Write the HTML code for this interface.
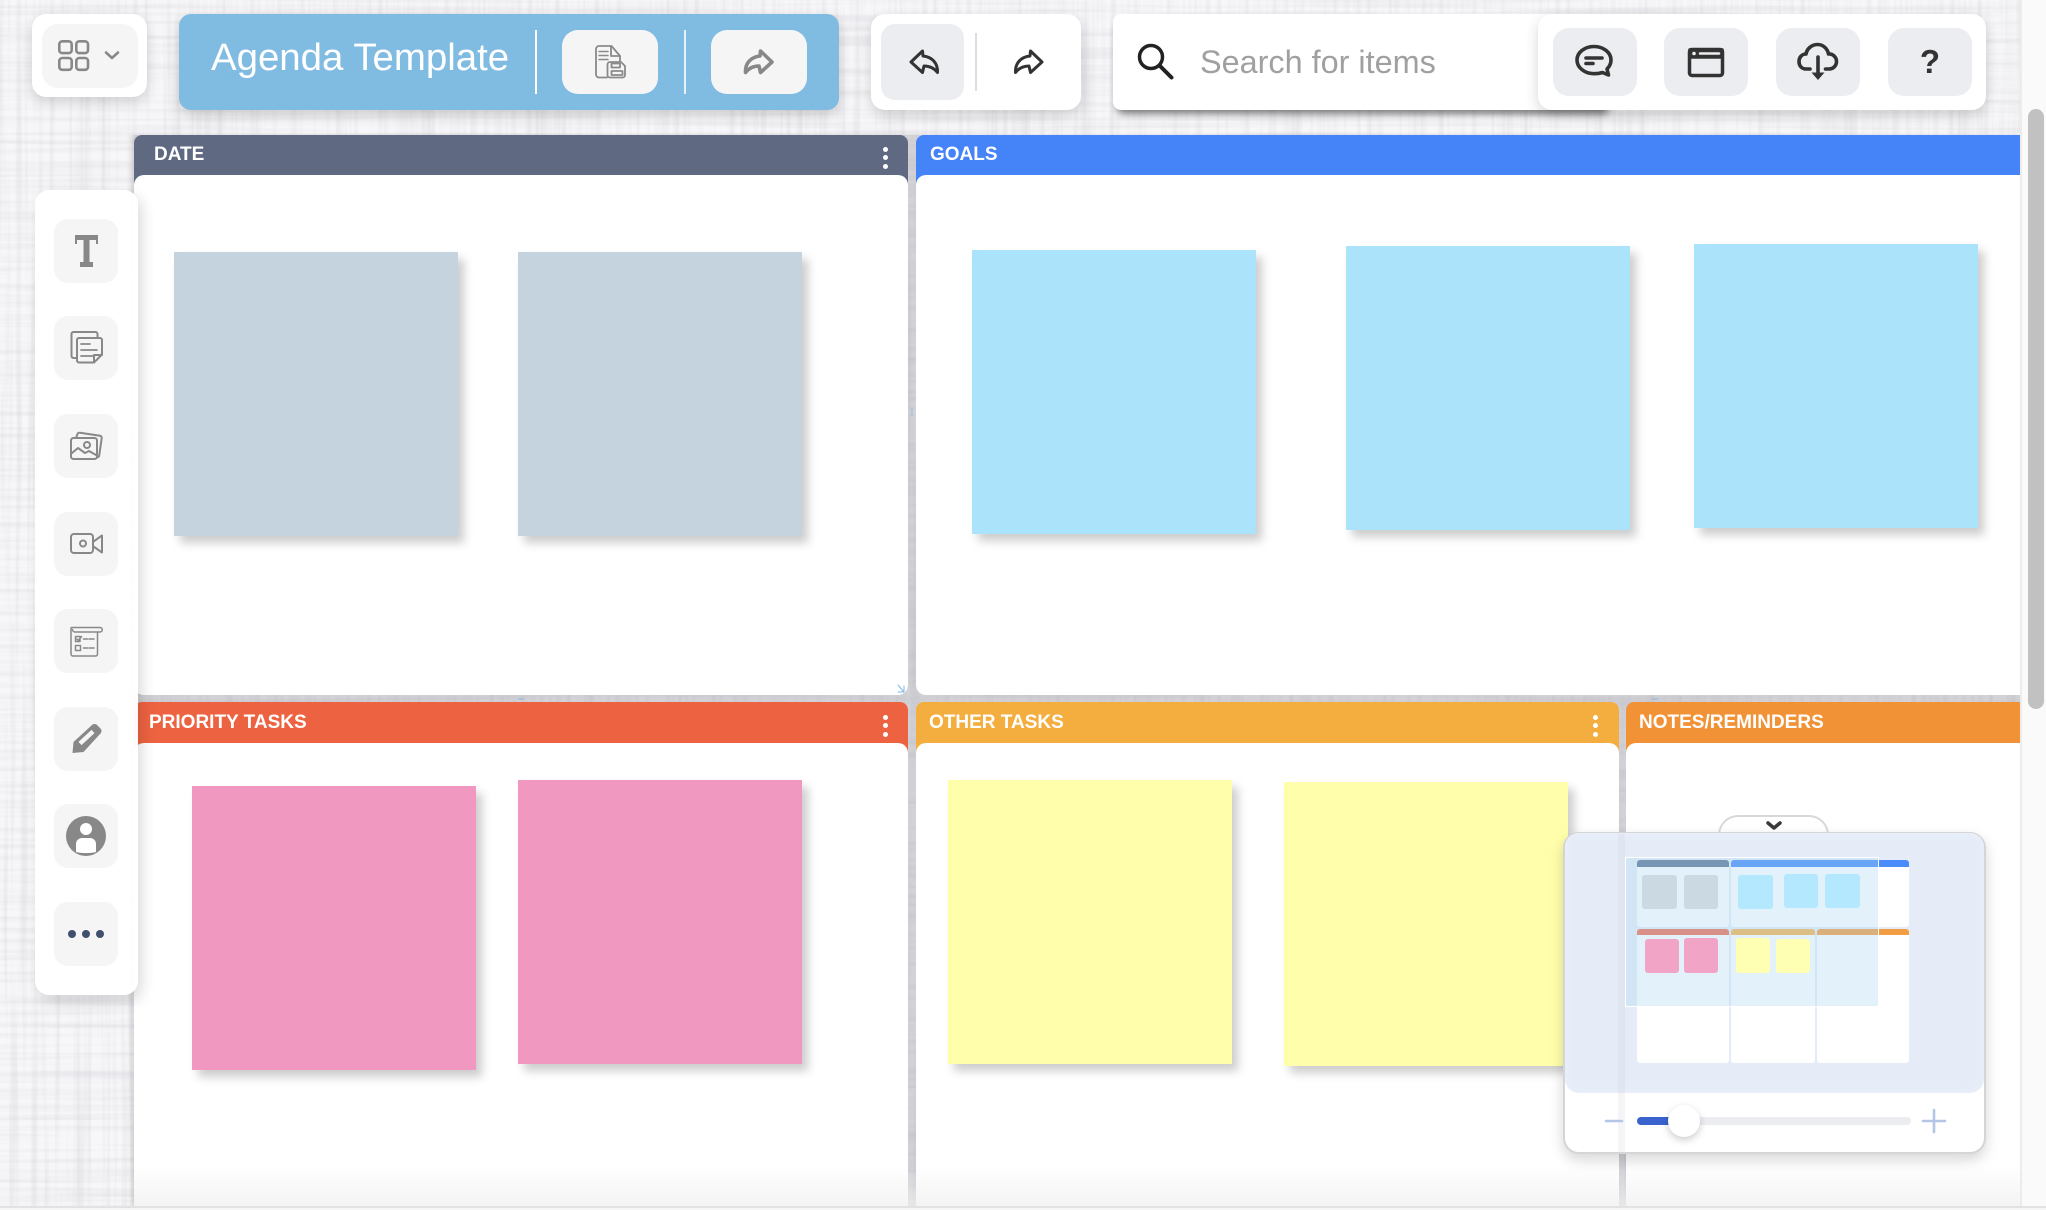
<!DOCTYPE html>
<html lang="en">
<head>
<meta charset="utf-8">
<title>Agenda Template</title>
<style>
html,body{margin:0;padding:0;width:2046px;height:1210px;overflow:hidden;background:#f5f5f7;font-family:"Liberation Sans",sans-serif}
div,span{position:absolute;box-sizing:border-box}
#bg{left:0;top:0;width:2046px;height:1210px;background-color:#f7f7f9}
#board{left:134px;top:135px;width:1886px;height:1071px;background-color:rgba(120,120,130,.29);box-shadow:-3px 0 4px rgba(0,0,0,.12)}
.cell{overflow:hidden}
.hd{left:0;top:0;width:100%;height:52px;border-radius:8px 8px 0 0}
.hd-t{left:0;top:0;color:#fff;font-weight:700;font-size:19px;line-height:20px;white-space:nowrap}
.body{left:0;top:40px;width:100%;bottom:0;background:#fff;border-radius:10px 10px 10px 10px}
.note{width:284px;height:284px;box-shadow:6px 7px 9px rgba(0,0,0,.2)}
.g{background:#c5d3de}.b{background:#abe3fb}.p{background:#f098c0}.y{background:#fefeab}
.dot{width:5px;height:5px;border-radius:50%;background:#fff}
.card{background:#fff;border-radius:14px;box-shadow:0 5px 14px rgba(0,0,0,.16)}
.btn{background:#f5f5f5;border-radius:16px}
.rb{background:#ecedf0;border-radius:16px;top:28px;width:84px;height:68px}
.sb{left:54px;width:64px;height:64px;background:#f5f5f5;border-radius:14px}
.m{position:absolute;border-radius:3px}
.mh{position:absolute;border-radius:3px 3px 0 0}
svg{position:absolute;left:0;top:0;overflow:visible}
</style>
</head>
<body>
<div id="bg">
<svg width="2046" height="1210" viewBox="0 0 2046 1210">
  <defs>
    <filter id="fv" x="0" y="0" width="100%" height="100%"><feTurbulence type="fractalNoise" baseFrequency="0.18 0.004" numOctaves="2" seed="4"/><feColorMatrix type="matrix" values="0 0 0 0 .6  0 0 0 0 .6  0 0 0 0 .65  .75 0 0 0 -.32"/></filter>
    <filter id="fh" x="0" y="0" width="100%" height="100%"><feTurbulence type="fractalNoise" baseFrequency="0.004 0.18" numOctaves="2" seed="9"/><feColorMatrix type="matrix" values="0 0 0 0 .6  0 0 0 0 .6  0 0 0 0 .65  .75 0 0 0 -.32"/></filter>
  </defs>
  <rect width="2046" height="1210" filter="url(#fv)"/>
  <rect width="2046" height="1210" filter="url(#fh)"/>
</svg>
</div>

<div id="board"></div>

<!-- Row 1 -->
<div class="cell" style="left:134px;top:135px;width:774px;height:560px">
  <div class="hd" style="background:#5f6a82"></div>
  <div class="body"></div>
  <div class="hd-t" style="left:20px;top:10px">DATE</div>
  <div class="dot" style="left:749px;top:12px"></div><div class="dot" style="left:749px;top:20px"></div><div class="dot" style="left:749px;top:29px"></div>
</div>
<div class="cell" style="left:916px;top:135px;width:1104px;height:560px">
  <div class="hd" style="background:#4483f8;border-radius:8px 0 0 0"></div>
  <div class="body" style="border-radius:10px 0 0 10px"></div>
  <div class="hd-t" style="left:14px;top:10px">GOALS</div>
</div>

<!-- Row 2 -->
<div class="cell" style="left:134px;top:702px;width:774px;height:504px">
  <div class="hd" style="background:#ed6341"></div>
  <div class="body" style="top:41px;border-radius:10px 10px 0 0"></div>
  <div class="hd-t" style="left:15px;top:11px">PRIORITY TASKS</div>
  <div class="dot" style="left:749px;top:13px"></div><div class="dot" style="left:749px;top:21px"></div><div class="dot" style="left:749px;top:30px"></div>
</div>
<div class="cell" style="left:916px;top:702px;width:703px;height:504px">
  <div class="hd" style="background:#f3ae3f"></div>
  <div class="body" style="top:41px;border-radius:10px 10px 0 0"></div>
  <div class="hd-t" style="left:13px;top:11px">OTHER TASKS</div>
  <div class="dot" style="left:677px;top:13px"></div><div class="dot" style="left:677px;top:21px"></div><div class="dot" style="left:677px;top:30px"></div>
</div>
<div class="cell" style="left:1626px;top:702px;width:394px;height:504px">
  <div class="hd" style="background:#f29236;border-radius:8px 0 0 0"></div>
  <div class="body" style="top:41px;border-radius:10px 0 0 0"></div>
  <div class="hd-t" style="left:13px;top:11px">NOTES/REMINDERS</div>
</div>

<!-- bottom fade of cells -->
<div style="left:134px;top:1165px;width:1886px;height:41px;background:linear-gradient(rgba(240,240,241,0),rgba(240,240,241,.75))"></div>

<!-- Notes -->
<div class="note g" style="left:174px;top:252px"></div>
<div class="note g" style="left:518px;top:252px"></div>
<div class="note b" style="left:972px;top:250px"></div>
<div class="note b" style="left:1346px;top:246px"></div>
<div class="note b" style="left:1694px;top:244px"></div>
<div class="note p" style="left:192px;top:786px"></div>
<div class="note p" style="left:518px;top:780px"></div>
<div class="note y" style="left:948px;top:780px"></div>
<div class="note y" style="left:1284px;top:782px"></div>

<!-- Scrollbars -->
<div style="left:2020px;top:0;width:26px;height:1206px;background:#fafafa;border-left:2px solid #ececec"></div>
<div style="left:2028px;top:109px;width:16px;height:600px;background:#c1c1c1;border-radius:8px"></div>
<div style="left:0;top:1206px;width:2046px;height:4px;background:#f6f6f6;border-top:2px solid #e2e2e2"></div>

<!-- App button -->
<div class="card" style="left:32px;top:14px;width:115px;height:83px"></div>
<div class="btn" style="left:42px;top:24px;width:96px;height:64px"></div>

<!-- Title bar -->
<div style="left:179px;top:14px;width:660px;height:96px;background:#80bbe2;border-radius:12px;box-shadow:0 5px 14px rgba(0,0,0,.18)"></div>
<div style="left:211px;top:35px;color:#fff;font-size:38.4px;line-height:46px;white-space:nowrap">Agenda Template</div>
<div style="left:535px;top:30px;width:2px;height:64px;background:#fff"></div>
<div class="btn" style="left:562px;top:30px;width:96px;height:64px"></div>
<div style="left:684px;top:30px;width:2px;height:64px;background:#e6f1f9"></div>
<div class="btn" style="left:711px;top:30px;width:96px;height:64px"></div>

<!-- Undo / redo -->
<div class="card" style="left:871px;top:14px;width:210px;height:96px"></div>
<div style="left:881px;top:24px;width:83px;height:76px;background:#ecedf0;border-radius:14px"></div>
<div style="left:975px;top:33px;width:2px;height:58px;background:#dddddf"></div>

<!-- Search -->
<div style="left:1113px;top:14px;width:496px;height:96px;background:#fff;border-radius:8px;box-shadow:2px 6px 8px -2px rgba(0,0,0,.5)"></div>
<div style="left:1200px;top:43px;color:#a0a0a0;font-size:32.4px;line-height:38px;white-space:nowrap">Search for items</div>

<!-- Right card -->
<div class="card" style="left:1538px;top:14px;width:448px;height:96px"></div>
<div class="rb" style="left:1553px"></div>
<div class="rb" style="left:1664px"></div>
<div class="rb" style="left:1776px"></div>
<div class="rb" style="left:1888px"></div>
<div style="left:1888px;width:84px;top:43px;text-align:center;color:#333;font-weight:700;font-size:33px;line-height:38px">?</div>

<!-- Sidebar -->
<div style="left:35px;top:190px;width:103px;height:805px;background:rgba(255,255,255,.97);border-radius:14px;box-shadow:4px 6px 14px rgba(0,0,0,.14)"></div>
<div class="sb" style="top:219px"></div>
<div class="sb" style="top:316px"></div>
<div class="sb" style="top:414px"></div>
<div class="sb" style="top:512px"></div>
<div class="sb" style="top:609px"></div>
<div class="sb" style="top:707px"></div>
<div class="sb" style="top:804px"></div>
<div class="sb" style="top:902px"></div>

<!-- Minimap -->
<div style="left:1718px;top:815px;width:111px;height:24px;background:#fff;border:2px solid #d8d8d8;border-bottom:0;border-radius:20px 20px 0 0"></div>
<div style="left:1563px;top:832px;width:423px;height:322px;background:#fff;border:2px solid #d5d5d5;border-radius:16px;box-shadow:0 6px 14px rgba(0,0,0,.16);overflow:hidden"></div>
<div style="left:1565px;top:833px;width:419px;height:260px;background:#e5ecf8;border-radius:14px;box-shadow:inset 0 0 8px #edf2fb"></div>
<div class="m" style="left:1637px;top:860px;width:92px;height:67px;background:#fff"></div>
<div class="m" style="left:1731px;top:860px;width:178px;height:67px;background:#fff"></div>
<div class="m" style="left:1637px;top:929px;width:92px;height:134px;background:#fff"></div>
<div class="m" style="left:1731px;top:929px;width:84px;height:134px;background:#fff"></div>
<div class="m" style="left:1817px;top:929px;width:92px;height:134px;background:#fff"></div>
<div class="mh" style="left:1637px;top:860px;width:92px;height:7px;background:#5f7696"></div>
<div class="mh" style="left:1731px;top:860px;width:178px;height:7px;background:#4a8cf9"></div>
<div class="mh" style="left:1637px;top:929px;width:92px;height:6px;background:#ed6f55"></div>
<div class="mh" style="left:1731px;top:929px;width:84px;height:6px;background:#f3b354"></div>
<div class="mh" style="left:1817px;top:929px;width:92px;height:6px;background:#f29c44"></div>
<div style="left:1625px;top:857px;width:254px;height:150px;border:1.5px solid #fff;background:rgba(170,215,240,.33)"></div>
<div class="m" style="left:1642px;top:875px;width:35px;height:34px;background:#cbd9e3"></div>
<div class="m" style="left:1684px;top:875px;width:34px;height:34px;background:#cbd9e3"></div>
<div class="m" style="left:1738px;top:875px;width:35px;height:34px;background:#b4e8fe"></div>
<div class="m" style="left:1784px;top:874px;width:34px;height:34px;background:#b4e8fe"></div>
<div class="m" style="left:1825px;top:874px;width:35px;height:34px;background:#b4e8fe"></div>
<div class="m" style="left:1645px;top:939px;width:34px;height:34px;background:#f1a4c6"></div>
<div class="m" style="left:1684px;top:938px;width:34px;height:35px;background:#f1a4c6"></div>
<div class="m" style="left:1736px;top:938px;width:34px;height:35px;background:#ffffb4"></div>
<div class="m" style="left:1776px;top:939px;width:34px;height:34px;background:#ffffb4"></div>
<div style="left:1618px;top:834px;width:7px;height:318px;background:rgba(190,195,205,.16)"></div>
<div style="left:1637px;top:1117px;width:274px;height:8px;background:#ecedf1;border-radius:4px"></div>
<div style="left:1637px;top:1117px;width:50px;height:8px;background:#3a63cf;border-radius:4px"></div>
<div style="left:1668px;top:1105px;width:32px;height:32px;background:#fff;border-radius:50%;box-shadow:0 3px 8px rgba(0,0,0,.2)"></div>

<!-- All icons -->
<svg width="2046" height="1210" viewBox="0 0 2046 1210" fill="none" stroke-linecap="round" stroke-linejoin="round">
  <!-- grid -->
  <g stroke="#888" stroke-width="2.6">
    <rect x="59.300" y="41.300" width="12.400" height="11.800" rx="3"/><rect x="76.300" y="41.300" width="11.700" height="11.800" rx="3"/>
    <rect x="59.300" y="58" width="12.400" height="11.800" rx="3"/><rect x="76.300" y="58" width="11.700" height="11.800" rx="3"/>
    <path d="M106 52.500l6 5.500 6-5.500"/>
  </g>
  <!-- save doc -->
  <g stroke="#8a8a8a" stroke-width="1.800">
    <path d="M607 77.500h-8a3 3 0 0 1-3-3V49a3 3 0 0 1 3-3h12.500l8.500 10v5.500"/>
    <path d="M611 46.500v9.500h9"/>
    <path d="M599 51.500h9M599 55.500h9M599 59.500h9" stroke-width="1.500"/>
    <path d="M610 62h11l4 4v9a2.500 2.500 0 0 1-2.500 2.500H610a2.500 2.500 0 0 1-2.500-2.500V64.500A2.500 2.500 0 0 1 610 62z"/>
    <rect x="611.500" y="63.500" width="8.500" height="4"/>
    <rect x="611.500" y="71" width="11" height="4"/>
  </g>
  <!-- share -->
  <path stroke="#888" stroke-width="3.600" d="M745.500 72.500C745 63 751 57 760 56L760.500 51L772 62L760.500 72.500L759 66C753 66 749 68 745.500 72.500Z"/>
  <!-- undo / redo -->
  <path stroke="#333" stroke-width="3" transform="matrix(-1 0 0 1 1683 0)" d="M745.500 72.500C745 63 751 57 760 56L760.500 51L772 62L760.500 72.500L759 66C753 66 749 68 745.500 72.500Z"/>
  <path stroke="#333" stroke-width="3" transform="translate(270 0)" d="M745.500 72.500C745 63 751 57 760 56L760.500 51L772 62L760.500 72.500L759 66C753 66 749 68 745.500 72.500Z"/>
  <!-- search -->
  <circle cx="1151" cy="57" r="11.500" stroke="#222" stroke-width="3.500"/>
  <path d="M1160 66l11.500 11.500" stroke="#222" stroke-width="4"/>
  <!-- chat -->
  <g stroke="#333" stroke-width="3.600">
    <path d="M1594 46.500c9.500 0 17 6 17 13.500 0 3.500-1.500 6.500-4 9l1.500 6-6-2.500c-2.500.8-5.500 1.200-8.500 1.200-9.500 0-17-6.200-17-13.700s7.500-13.500 17-13.500z"/>
    <path d="M1586 58h16M1586 63.500h7"/>
  </g>
  <!-- window -->
  <rect x="1689.500" y="49.500" width="33" height="26" rx="2.500" stroke="#333" stroke-width="3.500"/>
  <rect x="1689.500" y="49.500" width="33" height="8" fill="#333" stroke="#333" stroke-width="2.500"/>
  <circle cx="1694" cy="53.500" r="1.800" fill="#ecedf0"/>
  <path d="M1700 53.500h19" stroke="#ecedf0" stroke-width="2.500"/>
  <!-- cloud -->
  <g stroke="#333" stroke-width="3.600">
    <path d="M1810 69h-4c-4.500 0-7-3.500-7-7.500s2.800-7.500 7-7.500c1-5.500 6-9.500 11.500-9.500 5.500 0 10 4 11 9.500 4.500-.3 8 3.300 8 7.500s-3.300 7.500-7.500 7.500h-3.500"/>
    <path d="M1818 57v17"/>
  </g>
  <path d="M1811.500 72.500h13l-6.500 7.500z" fill="#333"/>
  <!-- sidebar: T -->
  <path d="M75 235h23v9h-2v-4h-6.500V262h3.500v5h-13v-5h3.500v-22H77v4h-2z" fill="#888"/>
  <!-- notes -->
  <g stroke="#888" stroke-width="2">
    <path d="M77 358h-3.500a2 2 0 0 1-2-2v-22a2 2 0 0 1 2-2h22a2 2 0 0 1 2 2v4"/>
    <path d="M94 362.500H79a2 2 0 0 1-2-2V340a2 2 0 0 1 2-2h21a2 2 0 0 1 2 2v14.500z"/>
    <path d="M94 362.500V355h8"/>
    <path d="M81 344h9M81 350h16M81 356h12" stroke-width="1.800"/>
  </g>
  <!-- images -->
  <g stroke="#888" stroke-width="2">
    <path d="M76 438l1.500-4a2 2 0 0 1 2.500-1.200l20 3a2 2 0 0 1 1.700 2.300l-2.500 17.500a2 2 0 0 1-2.200 1.700"/>
    <rect x="71" y="438" width="26" height="21" rx="2.500"/>
    <circle cx="87" cy="445" r="3"/>
    <path d="M72 453l6-5 7 5 4-2 7 4"/>
  </g>
  <!-- video -->
  <g stroke="#888" stroke-width="2">
    <rect x="71" y="534" width="22" height="19" rx="3"/>
    <circle cx="83" cy="543.500" r="3"/>
    <path d="M93.500 541.500l8.500-6v17l-8.500-6"/>
  </g>
  <!-- form -->
  <g stroke="#888" stroke-width="1.500">
    <path d="M97.500 632v22a2 2 0 0 1-2 2H73a2 2 0 0 1-2-2V628"/>
    <path d="M71.500 627.500h28.500a2 2 0 0 1 0 4.500H75a2.500 2.500 0 0 1-2.500-2.500"/>
    <rect x="75.500" y="645.500" width="5" height="5"/>
    <path d="M75.500 636.500h4.500v5h-4.500zM77 639l1.500 1.500 3-4M83.500 639h4M89 639h5M83.500 648h4M89 648h5"/>
  </g>
  <!-- pencil -->
  <path d="M72.500 753l1-11 18.500-17c1.500-1.300 3.500-1.300 5 0l3.500 3.500c1.300 1.500 1.300 3.500 0 5L83.500 752z" fill="#888"/>
  <path d="M80 743.500L93 731.500" stroke="#f5f5f5" stroke-width="4.500" stroke-linecap="butt"/>
  <!-- user -->
  <circle cx="86" cy="836" r="20" fill="#888"/>
  <circle cx="86" cy="829" r="6" fill="#fff"/>
  <path d="M76 852v-8a6 6 0 0 1 6-6h8a6 6 0 0 1 6 6v8c-6 1.500-14 1.500-20 0z" fill="#fff"/>
  <!-- more -->
  <circle cx="72" cy="934" r="4" fill="#3f4f6f"/><circle cx="86" cy="934" r="4" fill="#3f4f6f"/><circle cx="100" cy="934" r="4" fill="#3f4f6f"/>
  <!-- minimap chevron, slider signs -->
  <path d="M1768 823l6 5 6-5" stroke="#3a3a3a" stroke-width="3.500"/>
  <path d="M1606 1121h16M1923 1121h22M1934 1110v22" stroke="#b4c6e6" stroke-width="2.600"/>
  <!-- tiny resize handles -->
  <path d="M898 685l6 7M904 686v6h-6" stroke="#7fb9e2" stroke-width="1"/>
  <path d="M519 699h.1M521 699h.1M523 699h.1M1653 699h.1M1655 699h.1M1657 699h.1M912 409v.1M912 412v.1M912 415v.1" stroke="#7fb9e2" stroke-width="1.500"/>
</svg>
</body>
</html>
